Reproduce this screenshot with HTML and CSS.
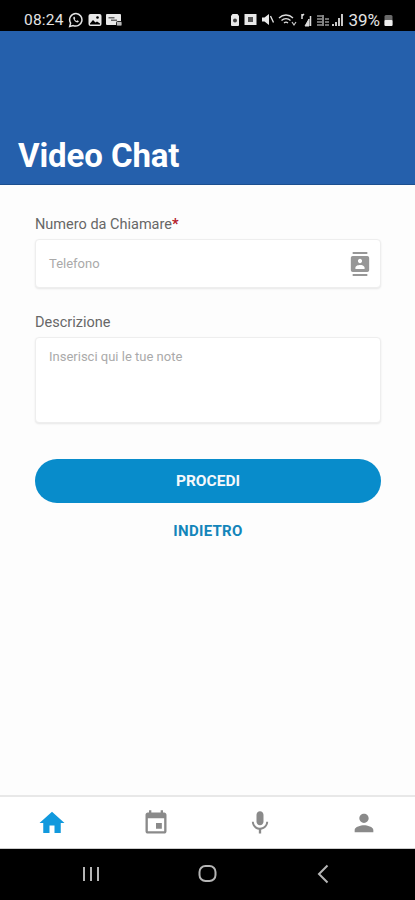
FILE: index.html
```html
<!DOCTYPE html>
<html lang="it">
<head>
<meta charset="utf-8">
<title>Video Chat</title>
<link rel="stylesheet" href="styles.css">
</head>
<body>
<div class="app">
  <div class="status">
    <div class="status-group">
      <span class="status-text">08:24</span>
      <svg class="si" width="16" height="16" viewBox="0 0 16 16"><path d="M8 1.500a6.300 6.300 0 0 0-5.400 9.600L1.700 14.500l3.500-.9A6.300 6.300 0 1 0 8 1.500z" fill="none" stroke="#e4e4e4" stroke-width="1.500"/><path d="M5.800 4.800c-.9.900-.6 2.400.7 3.900s2.900 2.200 3.900 1.400l.5-.9-1.600-.9-.6.600c-.9-.3-1.700-1.100-2-2l.6-.6-.8-1.600z" fill="#e4e4e4"/></svg>
      <svg class="si" width="14" height="14" viewBox="0 0 14 14"><rect x="0.500" y="1" width="13" height="12" rx="2" fill="#e8e8e8"/><circle cx="9.500" cy="4.500" r="1.300" fill="#000"/><path d="M2 10.500l3-3.500 2.500 2.500 1.500-1 3 2V11.500H2z" fill="#000"/></svg>
      <svg class="si" width="16" height="14" viewBox="0 0 16 14"><rect x="0" y="1" width="15" height="11" rx="1" fill="#e8e8e8"/><rect x="2.500" y="4" width="6" height="1.500" fill="#666"/><rect x="5" y="6.500" width="6" height="1.500" fill="#666"/><rect x="10.500" y="8.500" width="5.500" height="4.500" rx="1" fill="#bbb" stroke="#000" stroke-width=".8"/></svg>
    </div>
    <div class="status-group status-right">
      <svg class="si" width="10" height="14" viewBox="0 0 10 14"><path d="M2.500 1h5L9 3v9a1 1 0 0 1-1 1H2a1 1 0 0 1-1-1V3z" fill="#e8e8e8"/><circle cx="5" cy="7.500" r="2" fill="#444"/></svg>
      <svg class="si" width="13" height="13" viewBox="0 0 13 13"><rect x="0.500" y="1" width="12" height="11" fill="#e8e8e8"/><rect x="4" y="4" width="5" height="5" fill="#555"/></svg>
      <svg class="si" width="13" height="13" viewBox="0 0 13 13"><path d="M1 4.500h2.500L8 1v11L3.500 8.500H1z" fill="#e8e8e8"/><path d="M9.500 3l3 6.500" stroke="#e8e8e8" stroke-width="1.300"/></svg>
      <svg class="si" width="19" height="14" viewBox="0 0 19 14"><path d="M1 5c4-4 10-4 14 0M3.500 7.500c2.500-2.500 6.500-2.500 9 0M6 10c1.300-1.200 2.700-1.200 4 0" fill="none" stroke="#ddd" stroke-width="1.300"/><path d="M14 9l2 3 2-3" fill="none" stroke="#ccc" stroke-width="1.200"/></svg>
      <svg class="si" width="11" height="14" viewBox="0 0 11 14"><path d="M8 13V6l-4 7z" stroke="#ddd" fill="#ddd" stroke-width="1"/><path d="M1 1v5M3 1L1 3M9.500 3v10" stroke="#ddd" stroke-width="1.500"/></svg>
      <svg class="si" width="28" height="14" viewBox="0 0 28 14"><path d="M1 3h5M1 6h5M1 9h5M1 12h5M7 2v11M9 6h4M9 9h4M9 12h4" stroke="#ddd" stroke-width="1.200"/><path d="M17 13v-2M20 13V9M23 13V5M26 13V1" stroke="#ddd" stroke-width="1.800"/></svg>
      <span class="status-text status-pct">39%</span>
      <svg class="si" width="9" height="14" viewBox="0 0 9 14"><rect x="0.500" y="2" width="8" height="11" rx="1.500" fill="#6a6a6a"/><rect x="0.500" y="7" width="8" height="6" rx="1" fill="#eee"/></svg>
    </div>
  </div>

  <header class="header"><h1 class="title">Video Chat</h1></header>

  <main class="content">
    <div class="field">
      <label class="label">Numero da Chiamare<span class="req">*</span></label>
      <div class="box box-input">
        <span class="placeholder">Telefono</span>
        <svg class="contact" width="22" height="24" viewBox="0 0 24 24" preserveAspectRatio="none"><path d="M20 0H4v2h16V0zM4 24h16v-2H4v2zM20 4H4c-1.100 0-2 .9-2 2v12c0 1.100.9 2 2 2h16c1.100 0 2-.9 2-2V6c0-1.100-.9-2-2-2zm-8 2.750c1.240 0 2.250 1.010 2.250 2.250s-1.010 2.250-2.250 2.250S9.750 10.240 9.750 9 10.760 6.750 12 6.750zM17 17H7v-1.500c0-1.670 3.330-2.500 5-2.500s5 .83 5 2.500V17z" fill="#979797"/></svg>
      </div>
    </div>
    <div class="field field-desc">
      <label class="label">Descrizione</label>
      <div class="box box-area"><span class="placeholder">Inserisci qui le tue note</span></div>
    </div>
    <button class="primary">PROCEDI</button>
    <a class="back">INDIETRO</a>
  </main>

  <nav class="tabs">
    <svg class="tab" width="30" height="30" viewBox="0 0 24 24"><path d="M10 20v-6h4v6h5v-8h3L12 3 2 12h3v8z" fill="#1199dd"/></svg>
    <svg class="tab" width="28" height="28" viewBox="0 0 24 24"><path d="M17 12h-5v5h5v-5zM16 1v2H8V1H6v2H5c-1.110 0-1.990.9-1.990 2L3 19c0 1.100.89 2 2 2h14c1.100 0 2-.9 2-2V5c0-1.100-.9-2-2-2h-1V1h-2zm3 18H5V8h14v11z" fill="#8a8a8a"/></svg>
    <svg class="tab" width="28" height="28" viewBox="0 0 24 24"><path d="M12 14c1.660 0 2.990-1.340 2.990-3L15 5c0-1.660-1.340-3-3-3S9 3.340 9 5v6c0 1.660 1.340 3 3 3zm5.300-3c0 3-2.540 5.100-5.300 5.100S6.700 14 6.700 11H5c0 3.410 2.720 6.230 6 6.720V21h2v-3.280c3.280-.48 6-3.300 6-6.720h-1.700z" fill="#8a8a8a"/></svg>
    <svg class="tab" width="28" height="28" viewBox="0 0 24 24"><path d="M12 12c2.210 0 4-1.790 4-4s-1.790-4-4-4-4 1.790-4 4 1.790 4 4 4zm0 2c-2.670 0-8 1.340-8 4v2h16v-2c0-2.660-5.330-4-8-4z" fill="#8a8a8a"/></svg>
  </nav>

  <div class="sysnav">
    <svg width="18" height="16" viewBox="0 0 18 16"><path d="M2 1v14M9 1v14M16 1v14" stroke="#b5b5b5" stroke-width="2"/></svg>
    <svg width="19" height="19" viewBox="0 0 19 19"><rect x="1.500" y="2" width="16" height="15" rx="6" fill="none" stroke="#b5b5b5" stroke-width="2"/></svg>
    <svg class="sys-back" width="12" height="20" viewBox="0 0 12 20"><path d="M10.500 1.500L2 10l8.500 8.500" fill="none" stroke="#b5b5b5" stroke-width="2"/></svg>
  </div>
</div>
</body>
</html>
```

FILE: styles.css
```css
* { box-sizing: border-box; }
html, body { margin: 0; padding: 0; }
body { font-family: Roboto, "Liberation Sans", sans-serif; background: #fdfdfd; }
.app { width: 415px; height: 900px; display: flex; flex-direction: column; overflow: hidden; }

.status { height: 31px; flex: none; background: #000; display: flex; justify-content: space-between; align-items: center; padding: 8px 22px 0 24px; color: #e4e4e4; }
.status-group { display: flex; align-items: center; gap: 4px; }
.status-text { font-size: 15.500px; line-height: 18px; letter-spacing: .2px; }
.status-pct { font-size: 17px; letter-spacing: 0; }
.si { display: block; flex: none; }

.header { height: 154px; flex: none; background: #2560ac; border-bottom: 1.500px solid #1c4f8f; display: flex; align-items: flex-end; padding: 0 18px 9px; }
.title { margin: 0; font-size: 33px; line-height: 38px; font-weight: 700; color: #fff; letter-spacing: -.1px; }

.content { flex: 1; padding: 31px 34px 0 35px; display: flex; flex-direction: column; }
.field { display: flex; flex-direction: column; }
.field-desc { margin-top: 26px; }
.label { font-size: 14.500px; line-height: 18px; color: #676767; margin-bottom: 5px; }
.req { color: #b3202c; font-weight: 700; }
.box { background: #fff; border: 1px solid #eee; border-radius: 4px; box-shadow: 0 1px 2px rgba(0,0,0,.09); }
.box-input { height: 49px; display: flex; align-items: center; justify-content: space-between; padding: 0 9px 0 13px; }
.box-area { height: 86px; padding: 11px 13px; display: flex; align-items: flex-start; }
.placeholder { font-size: 13px; line-height: 16px; color: #aaa; }
.contact { display: block; }

.primary { margin-top: 36px; height: 44px; width: 100%; border: 0; border-radius: 22px; background: #088ccb; color: #f4f8fb; font-family: inherit; font-size: 15.500px; font-weight: 700; }
.back { margin-top: 19px; text-align: center; font-size: 15px; line-height: 19px; font-weight: 700; color: #1385ba; letter-spacing: .3px; }

.tabs { height: 54px; flex: none; background: #fff; border-top: 2px solid #e8e8e8; border-bottom: 1px solid #ccc; display: grid; grid-template-columns: repeat(4, 104px); justify-items: center; align-items: center; }
.tab { display: block; }

.sysnav { height: 51px; flex: none; background: #000; display: flex; align-items: center; gap: 98px; padding: 0 0 2px 82px; }
.sys-back { margin-left: 2px; }
```
